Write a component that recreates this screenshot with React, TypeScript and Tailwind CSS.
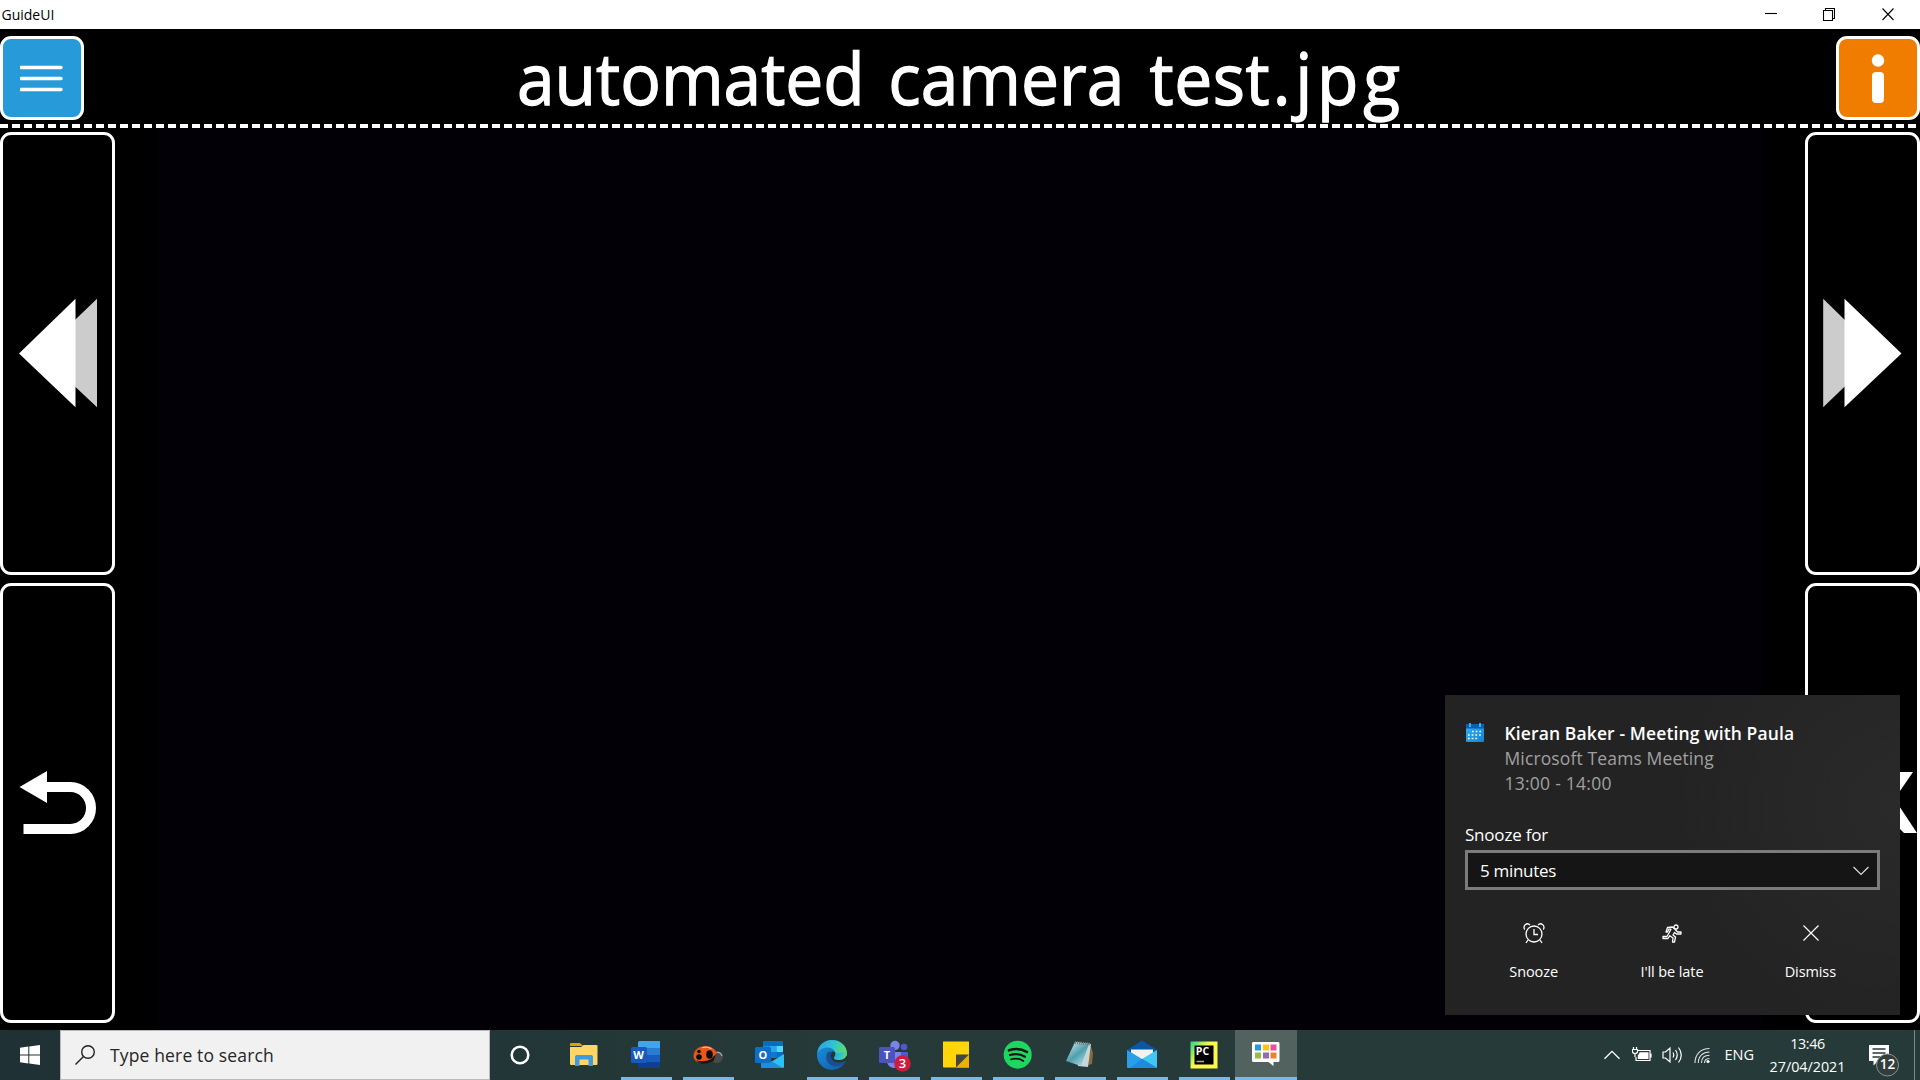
import type { ReactNode } from 'react';

const FRAME = 'rounded-[11px] border-[3px] border-white bg-black';

function TitleBar() {
  return (
    <div className="flex h-[29px] shrink-0 items-center justify-between bg-white text-black">
      <span className="pl-[1.5px] text-[14px] leading-[29px]">GuideUI</span>
      <div className="flex h-[29px]">
        {[
          <path key="a" d="M0 5.5H12" />,
          <path key="b" d="M.5 2.5H9.5V12.5H.5ZM2.5 2.5V.5H11.5V10.5H9.5" />,
          <path key="c" d="M.5 .5L11.5 12M11.5 .5L.5 12" />,
        ].map((p, i) => (
          <div key={i} className="flex w-[58.5px] items-center justify-center">
            <svg width="12" height="13" viewBox="0 0 12 13" fill="none" stroke="#000" strokeWidth="1.1">
              {p}
            </svg>
          </div>
        ))}
        <div className="w-[3px]" />
      </div>
    </div>
  );
}

function Header() {
  return (
    <div className="flex h-[95px] shrink-0 items-start justify-between pt-[7px]">
      <div className="flex h-[84px] w-[84px] items-center justify-center rounded-[11px] border-[3px] border-white bg-[#279bd9]">
        <svg width="44" height="28" viewBox="0 0 44 28" stroke="#fff" strokeWidth="3.4" strokeLinecap="round">
          <path d="M1 3.5H41M1 14.5H41M1 25.500H41" />
        </svg>
      </div>
      <h1 className="-mt-[3px] flex w-[887px] origin-left scale-x-[0.94] text-[72px] leading-[88px] whitespace-pre text-white [-webkit-text-stroke:1.3px_white]">
        <span className="w-[395px] shrink-0">automated </span>
        <span className="w-[278px] shrink-0">camera </span>
        <span className="w-[131px] shrink-0 tracking-[0.5px]">test</span>
        <span className="shrink-0 tracking-[5px]">.jpg</span>
      </h1>
      <div className="flex h-[84px] w-[84px] items-center justify-center rounded-[11px] border-[3px] border-white bg-[#f07d00]">
        <svg width="14" height="50" viewBox="0 0 14 50" fill="#fff">
          <circle cx="7" cy="7.5" r="6.2" />
          <rect x="1" y="19" width="12" height="31" rx="4" />
        </svg>
      </div>
    </div>
  );
}

function LeftColumn() {
  return (
    <div className="flex w-[115px] flex-col gap-[8px] pt-[4px] pb-[7px]">
      <div className={`flex h-[443px] pt-[163px] pl-[14px] ${FRAME}`}>
        <svg width="82" height="110" viewBox="0 0 82 110">
          <path d="M23 55.500L80 .8V109.200Z" fill="#ccc" />
          <path d="M2 55.500L58.500 .8V109.200Z" fill="#fff" />
        </svg>
      </div>
      <div className={`flex h-[440px] pt-[184px] pl-[15px] ${FRAME}`}>
        <svg width="80" height="66" viewBox="0 0 80 66">
          <path d="M1.500 17L29 1V33Z" fill="#fff" />
          <path d="M28 17H52.500A20.500 21 0 0 1 52.500 59H5.500" fill="none" stroke="#fff" strokeWidth="10" />
        </svg>
      </div>
    </div>
  );
}

function RightColumn() {
  return (
    <div className="flex w-[115px] flex-col gap-[8px] pt-[4px] pb-[7px]">
      <div className={`flex h-[443px] pt-[163px] pl-[14px] ${FRAME}`}>
        <svg width="82" height="110" viewBox="0 0 82 110">
          <path d="M57 55.500L1.200 .8V109.200Z" fill="#ccc" />
          <path d="M79.500 55.500L22.500 .8V109.200Z" fill="#fff" />
        </svg>
      </div>
      <div className={`flex h-[440px] justify-end pt-[186px] ${FRAME}`}>
        <svg width="108" height="62" viewBox="0 0 108 62">
          <path d="M18 0H35L55 22L76 0H104L85.500 27L108 61H95L76 42L55 61H18Z" fill="#fff" />
        </svg>
      </div>
    </div>
  );
}

function ToastAction({ label, children }: { label: string; children: ReactNode }) {
  return (
    <div className="flex flex-1 flex-col items-center">
      <div className="flex h-[22px] items-center">{children}</div>
      <span className="mt-[18px] -ml-px text-[14.5px] leading-[20px] tracking-[-0.1px] text-white">{label}</span>
    </div>
  );
}

function Toast() {
  return (
    <div className="absolute top-[695px] left-[1445px] h-[320px] w-[455px] bg-[#232323] bg-[radial-gradient(circle_at_100%_35%,#2a2a2a_0%,#232323_45%)] px-[20px] pt-[26px] text-white">
      <div className="flex">
        <svg className="mt-[2px] ml-[1px] shrink-0" width="18" height="20" viewBox="0 0 18 20">
          <defs>
            <linearGradient id="cal" x1="0" y1="0" x2="1" y2="1">
              <stop offset="0" stopColor="#35b5f0" />
              <stop offset="1" stopColor="#1282d6" />
            </linearGradient>
          </defs>
          <rect y="1" width="18" height="18" rx="1" fill="url(#cal)" />
          <path d="M0 2a1 1 0 0 1 1-1h16a1 1 0 0 1 1 1v3.500H0Z" fill="#0c5eae" />
          <path d="M4 0V4M14 0V4" stroke="#43c6f5" strokeWidth="1.600" />
          <path d="M6 8.500H16M2 12H16M2 15.500H12" stroke="#fff" strokeWidth="1.700" strokeDasharray="1.700 2" />
        </svg>
        <div className="ml-[20.5px] text-[17.5px] leading-[25px]">
          <div className="font-semibold tracking-[0.12px]">Kieran Baker - Meeting with Paula</div>
          <div className="tracking-[0.13px] text-[#a0a0a0]">Microsoft Teams Meeting</div>
          <div className="tracking-[0.25px] text-[#a0a0a0]">13:00 - 14:00</div>
        </div>
      </div>
      <div className="mt-[27px] text-[17px] leading-[24px] tracking-[-0.2px]">Snooze for</div>
      <div className="mt-[3px] flex h-[40px] w-[415px] items-center justify-between border-[3px] border-[#7b7b7b] bg-[#151515] pt-[1px] pr-[8px] pl-[12px] text-[17px] tracking-[-0.3px]">
        5 minutes
        <svg width="16" height="10" viewBox="0 0 16 10" fill="none" stroke="#ddd" strokeWidth="1.200">
          <path d="M.5 1L8 8.500L15.500 1" />
        </svg>
      </div>
      <div className="mt-[32px] flex w-[415px]">
        <ToastAction label="Snooze">
          <svg width="22" height="21" viewBox="0 0 22 21" fill="none" stroke="#fff" strokeWidth="1.300">
            <circle cx="11" cy="11" r="8" />
            <path d="M11 6V11.500H15M5 17L3 20M17 17L19 20M1.800 6.500A3.300 3.300 0 1 1 7 2.200M20.200 6.500A3.300 3.300 0 1 0 15 2.200" />
          </svg>
        </ToastAction>
        <ToastAction label="I'll be late">
          <svg width="20" height="19" viewBox="0 0 20 19" fill="none" stroke="#fff" strokeWidth="1.300" strokeLinejoin="round">
            <circle cx="14" cy="3" r="2" />
            <path d="M5.500 3.500L10.500 3L13 5.200L15.500 8H19V10H14.500L12.500 8.500L11 11L13.500 13L12.500 18H10.500L11 14L7.800 11.700L6 14.500H1V12.500H5L9 5.200H6.800L5.500 8H4Z" />
          </svg>
        </ToastAction>
        <ToastAction label="Dismiss">
          <svg width="16" height="16" viewBox="0 0 16 16" stroke="#fff" strokeWidth="1.200">
            <path d="M.5 .5L15.500 15.500M15.500 .5L.5 15.500" />
          </svg>
        </ToastAction>
      </div>
    </div>
  );
}

const icons: { name: string; open: boolean; active?: boolean; art: ReactNode }[] = [
  {
    name: 'explorer',
    open: false,
    art: (
      <>
        <path d="M2 5a1 1 0 0 1 1-1h9l3 3H2Z" fill="#e0a100" />
        <path d="M2 8H13L15.500 6H28.500a1 1 0 0 1 1 1V25a1 1 0 0 1-1 1H3a1 1 0 0 1-1-1Z" fill="#ffd563" />
        <path d="M7 27V18a2 2 0 0 1 2-2H23a2 2 0 0 1 2 2V27H20.500V20.500H11.500V27Z" fill="#3e9be0" />
      </>
    ),
  },
  {
    name: 'word',
    open: true,
    art: (
      <>
        <path d="M8 3.500a1.500 1.500 0 0 1 1.500-1.500H30V9H8Z" fill="#41a5ee" />
        <path d="M8 9H30V16H8Z" fill="#2b7cd3" />
        <path d="M8 16H30V23H8Z" fill="#185abd" />
        <path d="M8 23H30V29H9.500A1.500 1.500 0 0 1 8 27.500Z" fill="#103f91" />
        <rect x="1" y="8" width="16" height="16" rx="1.500" fill="#185abd" />
        <text x="8.500" y="20" fontSize="11" fontWeight="700" fill="#fff" textAnchor="middle">W</text>
      </>
    ),
  },
  {
    name: 'ladybird',
    open: true,
    art: (
      <>
        <ellipse cx="24.500" cy="18" rx="6.500" ry="6" fill="#4a4a4a" />
        <path d="M1.500 17C1.500 11 7 7 13.500 7C19 7 23.500 10 24.500 14C22 20 18 24 13 24C6.500 24 1.500 22 1.500 17Z" fill="#e8561a" />
        <path d="M4 21C8 22.800 14 22.800 19 20L24 15L21.500 22L15 24.500H9Z" fill="#1d1310" />
        <ellipse cx="17.500" cy="15.500" rx="3.300" ry="4.300" fill="#0b0b0b" />
        <circle cx="7" cy="18" r="2.800" fill="#0b0b0b" />
        <circle cx="7" cy="12.500" r="1.800" fill="#0b0b0b" />
        <path d="M10 8.800C13 7.800 17 8 19.500 9.800" stroke="#ffb28c" strokeWidth="1.200" fill="none" />
        <path d="M24.500 13.500C27 13 29 14 30 17" stroke="#aaa" strokeWidth="1.200" fill="none" />
      </>
    ),
  },
  {
    name: 'outlook',
    open: false,
    art: (
      <>
        <rect x="9" y="2" width="20" height="17" rx="1.200" fill="#0a6cbd" />
        <path d="M9 7H16V13H9Z" fill="#1490df" />
        <path d="M16 7H22.500V13H16Z" fill="#28a8ea" />
        <path d="M22.500 7H29V13H22.500Z" fill="#50d9ff" />
        <path d="M9 13H22.500V19H9Z" fill="#0f78d4" />
        <path d="M7 29L30 15V27.500A1.500 1.500 0 0 1 28.500 29Z" fill="#2fc0f2" />
        <path d="M7 16L29 29H8.500A1.500 1.500 0 0 1 7 27.500Z" fill="#1b8fdc" />
        <rect x="1" y="8" width="16" height="16" rx="1.500" fill="#0f6fc6" />
        <text x="9" y="20" fontSize="11" fontWeight="700" fill="#fff" textAnchor="middle">O</text>
      </>
    ),
  },
  {
    name: 'edge',
    open: true,
    art: (
      <>
        <defs>
          <linearGradient id="edgeTop" x1="0" y1="0.300" x2="1" y2="0.600">
            <stop offset="0" stopColor="#2aa5e4" />
            <stop offset="0.500" stopColor="#2fc5cf" />
            <stop offset="1" stopColor="#66e05a" />
          </linearGradient>
          <linearGradient id="edgeLow" x1="0" y1="0" x2="1" y2="1">
            <stop offset="0" stopColor="#1a93df" />
            <stop offset="1" stopColor="#0f59a8" />
          </linearGradient>
        </defs>
        <circle cx="16" cy="16" r="15" fill="url(#edgeLow)" />
        <path d="M1.300 14C2 6 8.500 1 16 1C25 1 31 7.500 31 14C31 18.500 27.500 21 23.500 21C20 21 18 20 18 19C18 18.200 19.500 17.500 19.500 15C19.500 11.500 16 8.500 11.500 8.500C6.500 8.500 3 11 1.300 14Z" fill="url(#edgeTop)" />
        <path d="M12 13C8.500 17 10 25 17 27C22 28.500 27 26 29.500 22.500C30 22 29.500 21.500 28.800 22C24 24.300 17.500 24 14.500 19C13.200 16.500 14 14.500 15.500 13C14.500 12.300 13 12.200 12 13Z" fill="#164f92" />
        <path d="M18 19C18 18.200 19.500 17.500 19.500 15C19.500 13.500 18.500 12.500 16.500 12.500C14 14 13.500 17 15 19.500C18.500 24.500 25 24.500 29 22L31.500 22L31.500 16L23.500 21C20 21 18 20 18 19Z" fill="#243738" />
        <path d="M31 13C31.500 18 27.500 21 23.500 21C20 21 18 20 18 19L20 14Z" fill="url(#edgeTop)" />
      </>
    ),
  },
  {
    name: 'teams',
    open: true,
    art: (
      <>
        <circle cx="26" cy="8" r="3.300" fill="#5059c9" />
        <circle cx="17" cy="6.500" r="4.700" fill="#7b83eb" />
        <path d="M20 13H30V20A5.500 5.500 0 0 1 20 23Z" fill="#5059c9" />
        <path d="M9 13H23V22A7 7 0 0 1 9 22Z" fill="#7b83eb" />
        <rect x="1" y="8" width="16" height="16" rx="1.500" fill="#4b53bc" />
        <text x="9" y="20" fontSize="11" fontWeight="700" fill="#fff" textAnchor="middle">T</text>
        <circle cx="24.500" cy="24.500" r="8.300" fill="#cf1b3c" />
        <text x="24.500" y="29" fontSize="13" fontWeight="600" fill="#fff" textAnchor="middle">3</text>
      </>
    ),
  },
  {
    name: 'sticky notes',
    open: true,
    art: (
      <>
        <path d="M3 2.500H29V28.500H4A1 1 0 0 1 3 27.500Z" fill="#ffd60a" />
        <path d="M29 15.500V28.500H16Z" fill="#f0b000" />
        <path d="M16 15.500H29L16 28.500Z" fill="#444" />
      </>
    ),
  },
  {
    name: 'spotify',
    open: true,
    art: (
      <>
        <circle cx="15.700" cy="15.700" r="14" fill="#1ed760" />
        <path d="M7 11.300C13 9.400 20 10 25 13" stroke="#191414" strokeWidth="2.600" strokeLinecap="round" fill="none" />
        <path d="M8 16C13 14.500 19 15.200 23 17.700" stroke="#191414" strokeWidth="2.200" strokeLinecap="round" fill="none" />
        <path d="M9 20.300C13 19.300 18 19.600 21.300 21.900" stroke="#191414" strokeWidth="1.800" strokeLinecap="round" fill="none" />
      </>
    ),
  },
  {
    name: 'notepad',
    open: true,
    art: (
      <>
        <defs>
          <linearGradient id="note" x1="0" y1="0" x2="0.800" y2="1">
            <stop offset="0" stopColor="#e0eef0" />
            <stop offset="0.550" stopColor="#4f9fae" />
            <stop offset="1" stopColor="#b9dde4" />
          </linearGradient>
        </defs>
        <path d="M26 5L29 14L28 25L24 26Z" fill="#8a6a3a" />
        <path d="M12 3L27 5L24 28L14 27Z" fill="#c4d7db" />
        <path d="M11 3L25 5L17 27L2 22Z" fill="url(#note)" />
        <path d="M11 3.500L26 5" stroke="#777" strokeWidth="3" strokeDasharray="1 1" />
      </>
    ),
  },
  {
    name: 'mail',
    open: true,
    art: (
      <>
        <path d="M1 11L16 1.500L31 11V14H1Z" fill="#0a57a8" />
        <path d="M5 10.500H27V20H5Z" fill="#f2f2f2" />
        <path d="M1 11L16 20L31 29H2a1 1 0 0 1-1-1Z" fill="#2a9ee8" />
        <path d="M31 11L16 20L31 29Z" fill="#3fc8f6" />
        <path d="M16 20L31 29H4Z" fill="#1f8be0" />
      </>
    ),
  },
  {
    name: 'pycharm',
    open: true,
    art: (
      <>
        <defs>
          <linearGradient id="pyc" x1="0" y1="0" x2="0.700" y2="0.500">
            <stop offset="0" stopColor="#21d789" />
            <stop offset="0.700" stopColor="#fcf84a" />
          </linearGradient>
        </defs>
        <rect x="2.500" y="2.500" width="27" height="27" fill="url(#pyc)" />
        <rect x="6.500" y="6.500" width="19" height="19" fill="#000" />
        <text x="7.800" y="16.300" fontSize="10.500" fontWeight="700" fill="#fff">PC</text>
        <path d="M8.500 22.500H16" stroke="#aaa" strokeWidth="1.500" />
      </>
    ),
  },
  {
    name: 'grid',
    open: true,
    active: true,
    art: (
      <>
        <path d="M3 3H28a1.500 1.500 0 0 1 1.500 1.500V21.500a1.500 1.500 0 0 1-1.500 1.500H23.500V27L18.500 23H3.500A1.500 1.500 0 0 1 2 21.500V4.500A1.500 1.500 0 0 1 3 3Z" fill="#fff" />
        <path d="M5 5.500h6v6H5Z" fill="#279bd9" />
        <path d="M13 5.500h6v6H13Z" fill="#ffc20e" />
        <path d="M20.500 5.500h6v6h-6Z" fill="#ec4f9a" />
        <path d="M5 13.500h6v6H5Z" fill="#92c13e" />
        <path d="M13 13.500h6v6H13Z" fill="#8f6db0" />
        <path d="M20.500 13.500h6v6h-6Z" fill="#f0812a" />
      </>
    ),
  },
];

function Taskbar() {
  return (
    <div className="flex h-[50px] shrink-0 bg-linear-to-r from-[#203135] via-[#263b39] via-50% to-[#263b39] text-white">
      <div className="flex w-[60px] items-center justify-center">
        <svg width="20" height="20" viewBox="0 0 20 20" fill="#fff">
          <path d="M0 2.800L8.300 1.500V9.500H0ZM9.300 1.400L20 0V9.500H9.300ZM0 10.500H8.300V18.500L0 17.200ZM9.300 10.500H20V20L9.300 18.600Z" />
        </svg>
      </div>
      <div className="flex w-[430px] items-center border border-[#b9b9b9] bg-[#f1f1f1] pl-[14px] text-[#262626]">
        <svg width="20" height="20" viewBox="0 0 20 20" fill="none" stroke="#222" strokeWidth="1.400">
          <circle cx="13" cy="7" r="6.300" />
          <path d="M8.500 11.500L.5 19.500" />
        </svg>
        <span className="ml-[15px] text-[17.5px] leading-[24px] tracking-[0.15px]">Type here to search</span>
      </div>
      <div className="flex w-[61px] items-center pl-[20px]">
        <svg width="20" height="20" viewBox="0 0 20 20">
          <circle cx="10" cy="10" r="8.300" fill="none" stroke="#fff" strokeWidth="2.500" />
        </svg>
      </div>
      <div className="flex pl-[2px]">
        {icons.map((ic) => (
          <div
            key={ic.name}
            className={`flex w-[62px] flex-col items-center justify-between pt-[9px] ${ic.active ? 'bg-[#52635f]' : ''}`}
          >
            <svg width="32" height="32" viewBox="0 0 32 32" className="overflow-visible">
              {ic.art}
            </svg>
            <div className={`h-[3px] ${ic.active ? 'w-full' : 'w-[51px]'} ${ic.open ? 'bg-[#76b9ed]' : ''}`} />
          </div>
        ))}
      </div>
      <div className="ml-auto flex items-center">
        <svg width="16" height="10" viewBox="0 0 16 10" fill="none" stroke="#fff" strokeWidth="1.300">
          <path d="M.5 8.800L8 1.300L15.500 8.800" />
        </svg>
        <svg className="ml-[12px]" width="20" height="16" viewBox="0 0 20 16" fill="none" stroke="#fff" strokeWidth="1.200">
          <path d="M5.500 3.500H18V13.500H4V10M19 6.500V10.500M1.500 0V2.500M4.500 0V2.500M.5 2.500H5.500V4.500Q5.500 6.500 3 6.500Q.5 6.500 .5 4.500ZM3 6.500V10" />
          <path d="M7.500 5.200H16.500V12H5.800V8Q7.500 7.500 7.500 5.200Z" fill="#fff" stroke="none" />
        </svg>
        <svg className="ml-[10px]" width="21" height="18" viewBox="0 0 21 18" fill="none" stroke="#fff" strokeWidth="1.200">
          <path d="M1 6H3.500L8 2V16L3.500 12H1ZM11 6.500Q12.500 9 11 11.500M13.500 4Q17 9 13.500 14M16.500 1.500Q22 9 16.500 16.500" />
        </svg>
        <svg className="ml-[11px]" width="17" height="17" viewBox="0 0 17 17" fill="none" stroke="#fff" strokeWidth="1.100">
          <path d="M1 16C1 7 7 1.500 15.500 1.500M4.300 16C4.300 9 9 5 15.500 5M7.500 16C7.500 11 10.500 8.300 15.500 8.300M10.500 16Q10.500 11.700 15.500 11.500" opacity=".85" />
          <circle cx="14" cy="14.500" r="1.600" fill="#fff" stroke="none" />
        </svg>
        <span className="ml-[13px] text-[14.5px]">ENG</span>
        <div className="ml-[15.5px] flex w-[76px] flex-col items-center text-[14.3px] leading-[23px]">
          <span className="tracking-[-0.35px]">13:46</span>
          <span>27/04/2021</span>
        </div>
        <svg className="ml-[22.5px]" width="34" height="34" viewBox="0 0 34 34">
          <path d="M1 7H21V23H10L5.500 27.500V23H1Z" fill="#fff" />
          <path d="M4.500 11H17.500M4.500 15H17.500M4.500 19H12" stroke="#263b39" strokeWidth="1.300" />
        </svg>
        <div className="-ml-[26px] flex h-[23px] w-[23px] translate-y-[9.5px] items-center justify-center rounded-full border border-[#8b9391] bg-[#333d3c] text-[13.5px] leading-none font-semibold">
          12
        </div>
        <div className="ml-[15px] h-[50px] w-px bg-[#7b8987]" />
        <div className="w-[5px]" />
      </div>
    </div>
  );
}

export default function App() {
  return (
    <div className="relative flex h-[1080px] w-[1920px] flex-col overflow-hidden bg-black font-['Open_Sans','Noto_Sans',sans-serif]">
      <TitleBar />
      <Header />
      <div className="h-[4px] shrink-0 bg-[repeating-linear-gradient(90deg,#fff_0px,#fff_8px,#000_8px,#000_12px)]" />
      <div className="flex min-h-0 flex-1 justify-between">
        <LeftColumn />
        <div className="w-[1604px] bg-[#020006]" />
        <RightColumn />
      </div>
      <Taskbar />
      <Toast />
    </div>
  );
}
